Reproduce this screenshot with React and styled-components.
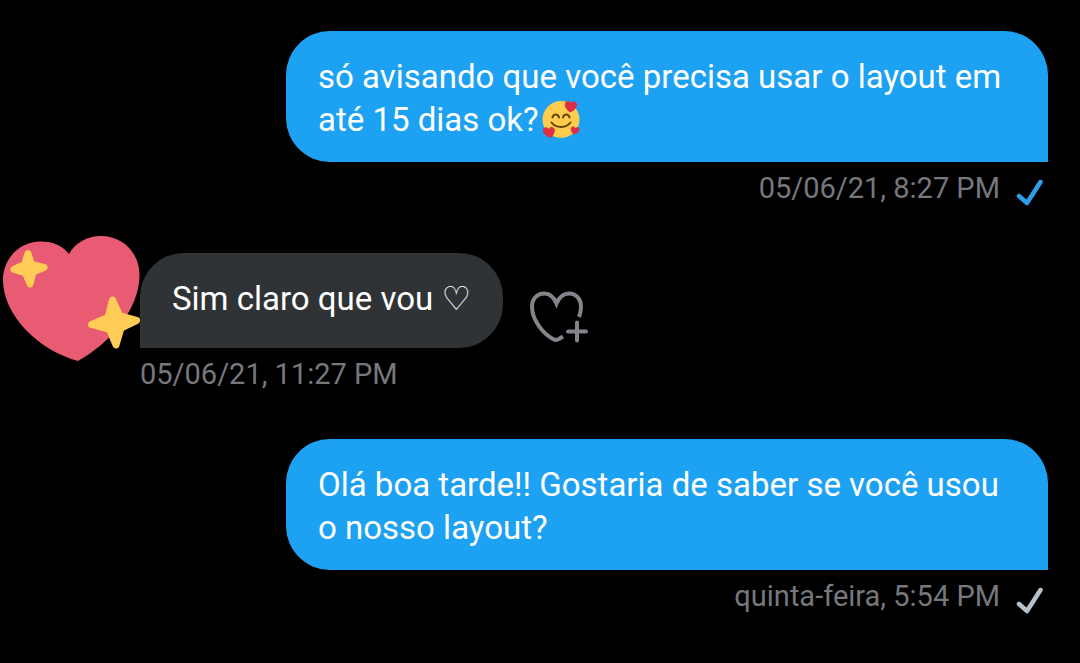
import React from 'react';
import styled, { createGlobalStyle, css } from 'styled-components';

const GlobalStyle = createGlobalStyle`
  body {
    margin: 0;
    background: #000;
    font-family: Roboto, 'DejaVu Sans', sans-serif;
  }
`;

const Conversation = styled.main`
  display: flex;
  flex-direction: column;
  padding: 31px 32px 0 0;
`;

const Message = styled.article`
  display: flex;
  flex-direction: column;
  align-items: ${p => (p.$sent ? 'flex-end' : 'flex-start')};
  padding-left: ${p => (p.$sent ? '286px' : '0')};
  margin-bottom: 47px;
`;

const BubbleRow = styled.div`
  display: flex;
  align-items: center;
`;

const Bubble = styled.p`
  margin: 0;
  padding: 24px 32px 21px;
  color: #fff;
  font-size: 33px;
  line-height: 43px;
  ${p =>
    p.$sent
      ? css`
          background: #1da1f2;
          border-radius: 44px 44px 0 44px;
        `
      : css`
          background: #2f3336;
          border-radius: 44px 44px 44px 0;
          padding-bottom: 28px;
        `}
`;

const Avatar = styled.div`
  flex: none;
  width: 140px;
  height: 101px;
  margin-top: -6px;
  display: flex;
  align-items: center;

  svg {
    flex: none;
    overflow: visible;
  }
`;

const Meta = styled.footer`
  display: flex;
  align-items: center;
  gap: 15px;
  height: 36px;
  margin-top: 8px;
  padding-left: ${p => (p.$sent ? '0' : '140px')};
  color: #75787c;
  font-size: 29px;
  line-height: 36px;
`;

const Reaction = styled.button`
  display: flex;
  margin: 31px 0 0 24px;
  padding: 0;
  border: none;
  background: none;
  color: #82868b;
  cursor: pointer;
`;

const Emoji = styled.svg`
  margin-left: 3px;
  vertical-align: -8px;
`;

const SparklingHeart = () => (
  <svg width="144" height="132" viewBox="0 0 144 132" role="img" aria-label="avatar">
    <path
      fill="#e85b72"
      d="M69 22C63 14 53 9.5 41 9.5C19 9.5 3 27 3 48C3 83 38 118 78 129C112 110 139.5 76 139.5 43C139.5 21 123 4 101 4C87 4 75 11 69 22Z"
    />
    <g fill="#ffcc56" stroke="#ffcc56" strokeWidth="7" strokeLinejoin="round">
      <path d="M28 21.500L31.500 32.500L44 35.500L33 40L30 52L25.500 41L14 37.500L24.500 32.500Z" />
      <path d="M112.500 68L120 84L136.500 88.500L121 96L116 113L109.500 97.500L91.500 92.500L108 85.500Z" />
    </g>
  </svg>
);

const SmilingHearts = () => (
  <Emoji width="38" height="39" viewBox="0 0 38 39" role="img" aria-label="🥰">
    <circle cx="19" cy="19.500" r="18.500" fill="#ffcc4d" />
    <g fill="none" stroke="#664500" strokeWidth="2" strokeLinecap="round">
      <path d="M10.500 17.500C11.500 13.500 16 13.500 17 17.500" />
      <path d="M21 17.500C22 13.500 26.500 13.500 27.500 17.500" />
      <path d="M9.500 22.500C14 28.500 24 28.500 28.500 22.500" />
    </g>
    <g fill="#dd2e44">
      <path d="M28 12.500C24 9.500 21.500 5.500 23.500 2.500C25.200 0.200 28 0.800 29 3C31 .8 34 1.200 35 4C35.800 7.500 32 10.800 28 12.500Z" />
      <path d="M8.500 38C4 36.500 0 33 1 29.500C2 27 5 26.500 6.500 29C8.500 26 11.500 26.500 12.500 29C13.500 32.500 11 36 8.500 38Z" />
      <path d="M32 34.500C29.500 32.500 28 29.500 29.200 27.500C30.500 25.800 32.500 26.200 33.200 28C34.800 26.500 37 27 37.500 29C37.800 31.500 35 33.700 32 34.500Z" />
    </g>
  </Emoji>
);

const HeartPlus = () => (
  <svg
    width="64"
    height="60"
    viewBox="0 0 64 60"
    fill="none"
    stroke="currentColor"
    strokeWidth="4"
    aria-hidden="true"
  >
    <path d="M52 31C53.500 27.500 54 24 54 20.500C54 13 49 7.500 42 7.500C36 7.500 32 11.500 29.500 17.500C27 11.500 23.500 7.500 17.500 7.500C10 7.500 5 13 5 20.500C5 35 17 48 26 53C28 54.200 30 54.200 31.500 53.200L36 50.500" />
    <path strokeLinecap="round" d="M50 36.500V54.500M41 45.500H59" />
  </svg>
);

const Check = ({ color }) => (
  <svg width="33" height="36" viewBox="0 0 33 36" role="img" aria-label="check">
    <path
      d="M4 26L12 33L25.500 12"
      fill="none"
      stroke={color}
      strokeWidth="4.5"
      strokeLinecap="round"
      strokeLinejoin="round"
    />
  </svg>
);

const SentMessage = ({ children, time, checkColor }) => (
  <Message $sent>
    <Bubble $sent>{children}</Bubble>
    <Meta $sent>
      <time>{time}</time>
      <Check color={checkColor} />
    </Meta>
  </Message>
);

const ReceivedMessage = ({ children, time }) => (
  <Message>
    <BubbleRow>
      <Avatar>
        <SparklingHeart />
      </Avatar>
      <Bubble>{children}</Bubble>
      <Reaction aria-label="Reagir">
        <HeartPlus />
      </Reaction>
    </BubbleRow>
    <Meta>
      <time>{time}</time>
    </Meta>
  </Message>
);

const App = () => (
  <>
    <GlobalStyle />
    <Conversation>
      <SentMessage time="05/06/21, 8:27 PM" checkColor="#2d9fe8">
        só avisando que você precisa usar o layout em até 15 dias ok?
        <SmilingHearts />
      </SentMessage>
      <ReceivedMessage time="05/06/21, 11:27 PM">Sim claro que vou ♡</ReceivedMessage>
      <SentMessage time="quinta-feira, 5:54 PM" checkColor="#b8c2ca">
        Olá boa tarde!! Gostaria de saber se você usou o nosso layout?
      </SentMessage>
    </Conversation>
  </>
);

export default App;
